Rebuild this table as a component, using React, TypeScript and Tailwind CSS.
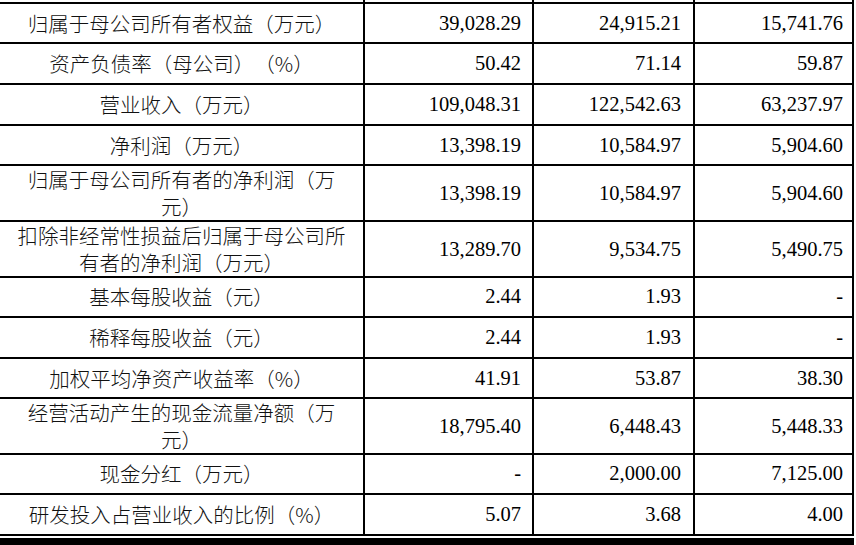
import React from "react";

type Row = { label: string; a: string; b: string; c: string; h: string };

const rows: Row[] = [
  { label: "归属于母公司所有者权益（万元）", a: "39,028.29", b: "24,915.21", c: "15,741.76", h: "h-[40px]" },
  { label: "资产负债率（母公司）（%）", a: "50.42", b: "71.14", c: "59.87", h: "h-[41px]" },
  { label: "营业收入（万元）", a: "109,048.31", b: "122,542.63", c: "63,237.97", h: "h-[41px]" },
  { label: "净利润（万元）", a: "13,398.19", b: "10,584.97", c: "5,904.60", h: "h-[40px]" },
  { label: "归属于母公司所有者的净利润（万元）", a: "13,398.19", b: "10,584.97", c: "5,904.60", h: "h-[56px]" },
  { label: "扣除非经常性损益后归属于母公司所有者的净利润（万元）", a: "13,289.70", b: "9,534.75", c: "5,490.75", h: "h-[55px]" },
  { label: "基本每股收益（元）", a: "2.44", b: "1.93", c: "-", h: "h-[41px]" },
  { label: "稀释每股收益（元）", a: "2.44", b: "1.93", c: "-", h: "h-[41px]" },
  { label: "加权平均净资产收益率（%）", a: "41.91", b: "53.87", c: "38.30", h: "h-[40px]" },
  { label: "经营活动产生的现金流量净额（万元）", a: "18,795.40", b: "6,448.43", c: "5,448.33", h: "h-[55px]" },
  { label: "现金分红（万元）", a: "-", b: "2,000.00", c: "7,125.00", h: "h-[41px]" },
  { label: "研发投入占营业收入的比例（%）", a: "5.07", b: "3.68", c: "4.00", h: "h-[41px]" },
];

const grid = "grid grid-cols-[365px_169px_161px_159px]";
const cell = "border-r-2 border-b-2 border-black";
const num =
  "flex items-center justify-end text-[20.5px] font-['Liberation_Serif','Times_New_Roman',serif] text-black";

export default function App() {
  return (
    <div lang="zh-CN" className="w-[856px] h-[545px] bg-white overflow-hidden">
      <div className={`${grid} h-[4px]`}>
        <div className={cell} />
        <div className={cell} />
        <div className={cell} />
        <div className={cell} />
      </div>
      {rows.map((r, i) => (
        <div key={i} className={`${grid} ${r.h}`}>
          <div
            className={`${cell} flex items-center justify-center px-3 text-center text-[20.5px] leading-[27px] font-light text-[#111] [text-spacing-trim:space-all] [font-feature-settings:'halt'_0] font-['Noto_Sans_CJK_SC','Noto_Sans',sans-serif]`}
          >
            {r.label}
          </div>
          <div className={`${cell} ${num} pr-[11px]`}>{r.a}</div>
          <div className={`${cell} ${num} pr-3`}>{r.b}</div>
          <div className={`${cell} ${num} pr-[9px]`}>{r.c}</div>
        </div>
      ))}
      <div className="mt-[2px] h-[10px] w-[854px] bg-black" />
    </div>
  );
}
